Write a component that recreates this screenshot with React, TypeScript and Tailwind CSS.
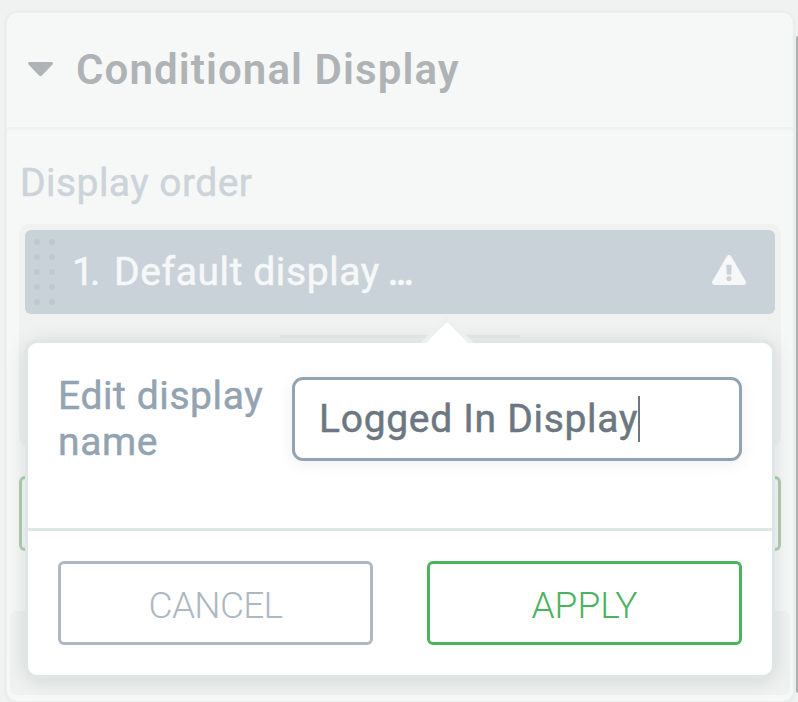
import { useState } from 'react';

const GRIP_DOTS = Array.from({ length: 10 }, (_, i) => i);

const DragHandle = () => (
  <div className="grid grid-cols-2 gap-[9px] w-[21px] shrink-0">
    {GRIP_DOTS.map((i) => (
      <span key={i} className="w-1.5 h-1.5 rounded-full bg-[#c0c8cf]" />
    ))}
  </div>
);

const WarningIcon = () => (
  <svg className="w-[34px] h-[30px] shrink-0 -mt-1" viewBox="0 0 34 30">
    <path
      fillRule="evenodd"
      fill="#f6f8f7"
      d="M14.8 1.3a2.5 2.5 0 0 1 4.4 0l14.4 24.9c1 1.7-.2 3.8-2.2 3.8H2.6C.6 30-.6 27.900.4 26.200zM14.300 10.500l.4 8.500q.05.8.8.8h3q.75 0 .8-.8l.4-8.500q0-.8-.8-.8h-3.800q-.8 0-.8.800zM17 21a2.600 2.600 0 1 0 0 5.200a2.600 2.600 0 0 0 0-5.200z"
    />
  </svg>
);

const DisplayItem = ({ index, label }: { index: number; label: string }) => (
  <div className="flex items-center h-[84px] pl-[9px] pr-[29px] rounded-md bg-[#cad2d9] text-[#f6f8f7] text-[39px] leading-none [-webkit-text-stroke:0.5px]">
    <DragHandle />
    <span className="ml-[17px] w-[42px] whitespace-nowrap tracking-[-4px]">{index}.</span>
    <span className="whitespace-nowrap tracking-[0.6px]">{label}</span>
    <span className="flex-1 ml-2 font-medium tracking-[-3px]">...</span>
    <WarningIcon />
  </div>
);

const EditNamePopover = () => {
  const [name, setName] = useState('Logged In Display');

  return (
    <div className="absolute left-[18px] top-[327px] w-[750px] h-[338px] rounded-xl border-[3px] border-[#dde7e8] bg-white shadow-[0_3px_20px_rgba(0,0,0,0.12)]">
      {/* Arrow pointing at the edited item */}
      <svg className="absolute left-[392px] -top-[28px] w-[56px] h-[29px]" viewBox="0 0 56 29">
        <path d="M0 28L27 1L54 28z" fill="#eeefef" />
        <path d="M5 29L27 7L49 29z" fill="#ffffff" />
      </svg>

      <div className="h-[188px] border-b-[3px] border-[#dde7e8] pl-[30px] pr-[27px] pt-[34px] flex items-start">
        <label className="w-[234px] pr-5 -mt-1 text-[39px] leading-[46px] tracking-[0.6px] text-[#93a3b1] [-webkit-text-stroke:0.5px]">
          Edit display name
        </label>
        <div className="relative flex items-center w-[450px] h-[84px] shrink-0 rounded-[11px] border-[3px] border-[#93a3b1] bg-white shadow-[0_3px_16px_rgba(0,0,0,0.07)]">
          <input
            value={name}
            onChange={(e) => setName(e.target.value)}
            className="w-full h-full pl-6 bg-transparent outline-none text-[39px] tracking-[0.7px] text-[#6c7781] [-webkit-text-stroke:0.5px]"
          />
          <span className="absolute left-[343px] top-4 w-0.5 h-[46px] bg-[#6c7781]" />
        </div>
      </div>

      <div className="flex justify-between px-[30px] pt-[30px] text-[37px] font-light">
        <button className="w-[315px] h-[84px] pt-1.5 rounded-md border-[3px] border-[#aeb8c2] text-[#aeb8c2] tracking-[-0.7px]">CANCEL</button>
        <button className="w-[315px] h-[84px] pt-1.5 rounded-md border-[3px] border-[#4ab35e] text-[#4ab35e]">APPLY</button>
      </div>
    </div>
  );
};

export default function App() {
  return (
    <div className="relative w-[798px] h-[702px] overflow-hidden bg-[#f0f2f1] pl-1 pt-2.5 font-['Roboto',sans-serif]">
      <div className="relative w-[792px] h-[694px] rounded-[13px] border-[3px] border-[#e8efed] bg-[#f6f8f7]">
        <div className="flex items-center h-[117px] border-b-[3px] border-[#f0f2f1] pl-[21px]">
          <svg className="w-[25px] h-[15px] shrink-0 -mt-0.5" viewBox="0 0 25 15">
            <path d="M1.500 0h22c1.300 0 1.900 1.500 1 2.400L13.900 13.600a2 2 0 0 1-2.800 0L.500 2.400C-.400 1.500.200 0 1.500 0z" fill="#afb3b6" />
          </svg>
          <h2 className="ml-[23px] text-[42px] leading-none font-semibold tracking-[1.1px] text-[#afb3b6] whitespace-nowrap">Conditional Display</h2>
        </div>

        <div className="px-3 pt-[30px]">
          <p className="h-[64px] pl-px text-[39px] leading-[46px] tracking-[0.45px] text-[#ccd4da] [-webkit-text-stroke:0.5px]">Display order</p>
          <div className="h-[223px] rounded-[10px] bg-[#f0f2f1] p-1.5">
            <DisplayItem index={1} label="Default display" />
            <div className="mx-auto mt-[21px] w-[240px] h-[3px] bg-[#e8eaea]" />
          </div>
          <div className="mt-[29px] h-[75px] rounded-md border-[3px] border-[#afceaf]" />
        </div>
        <div className="mx-[3px] mt-[60px] h-[84px] rounded-md bg-[#f0f2f1]" />

        <EditNamePopover />
      </div>
      <div className="absolute right-0 top-9 w-0.5 h-[657px] rounded-l-sm bg-[#acb0b2]" />
    </div>
  );
}
